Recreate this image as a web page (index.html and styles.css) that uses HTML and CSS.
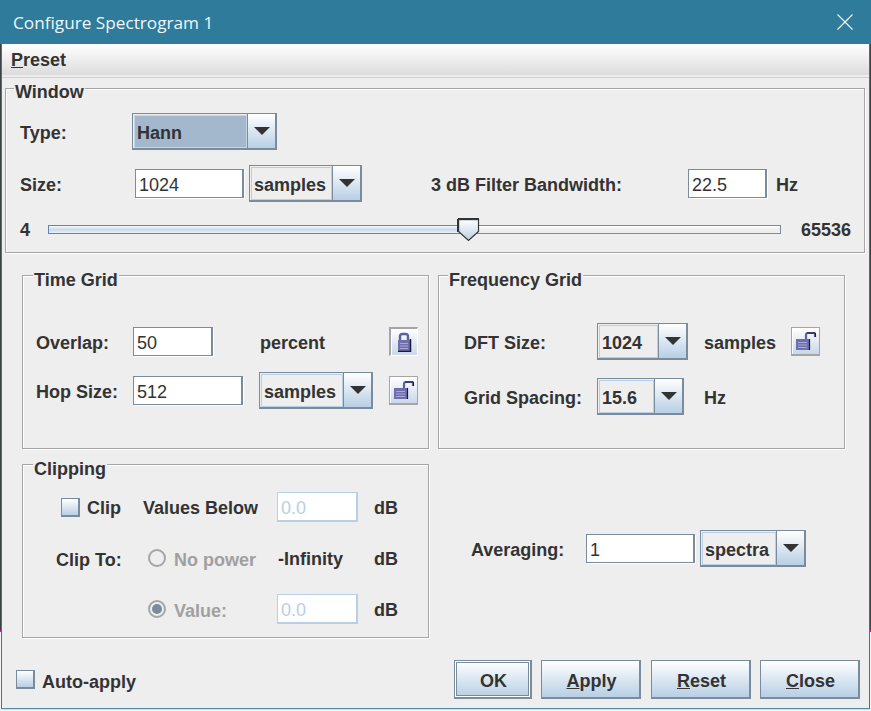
FILE: index.html
```html
<!DOCTYPE html>
<html lang="en">
<head>
    <meta charset="UTF-8">
    <meta name="viewport" content="width=device-width, initial-scale=1.0">
    <title>Configure Spectrogram 1</title>
    <link rel="stylesheet" href="styles.css">
</head>
<body>
<div class="dialog">
    <div class="titlebar">
        <span class="titlebar-text">Configure Spectrogram 1</span>
        <svg class="close-icon" width="16" height="16" viewBox="0 0 16 16"><path d="M0.5 0.5L15.5 15.5M15.5 0.5L0.5 15.5" stroke="#fff" stroke-width="1.1" fill="none"/></svg>
    </div>
    <div class="menubar"><span class="menu-item"><u>P</u>reset</span></div>

    <!-- Window -->
    <div class="group window-group">
        <span class="group-title">Window</span>
        <div class="row">
            <span class="label type-label">Type:</span>
            <div class="combo selected type-combo"><span class="combo-value">Hann</span><span class="combo-arrow"></span></div>
        </div>
        <div class="row">
            <span class="label size-label">Size:</span>
            <input class="field size-field" type="text" value="1024">
            <div class="combo size-combo"><span class="combo-value">samples</span><span class="combo-arrow"></span></div>
            <span class="label bandwidth-label">3 dB Filter Bandwidth:</span>
            <input class="field bandwidth-field" type="text" value="22.5">
            <span class="label hz-label">Hz</span>
        </div>
        <div class="row slider-row">
            <span class="label slider-min">4</span>
            <div class="slider">
                <div class="track-filled" style="width: 57.3%"></div>
                <div class="track-empty"></div>
                <svg class="thumb" style="left: 57.3%" width="23" height="24" viewBox="0 0 23 24">
                    <defs><linearGradient id="thumbFill" x1="0" y1="0" x2="0" y2="1"><stop offset="0" stop-color="#fff"/><stop offset="1" stop-color="#b8cfe5"/></linearGradient></defs>
                    <path d="M1.5 1.5H21.5V13.5L11.5 22.5L1.5 13.5Z" fill="url(#thumbFill)" stroke="#333" stroke-width="1.2"/>
                    <path d="M1 1H22" stroke="#333" stroke-width="2.4"/>
                    <path d="M1 1V14" stroke="#333" stroke-width="2.2"/>
                </svg>
            </div>
            <span class="label slider-max">65536</span>
        </div>
    </div>

    <div class="panels">
        <!-- Time Grid -->
        <div class="group grid-group">
            <span class="group-title">Time Grid</span>
            <div class="row time-row">
                <span class="label time-label">Overlap:</span>
                <input class="field overlap-field" type="text" value="50">
                <span class="label percent-label">percent</span>
                <button class="lock-btn pressed">
                    <svg width="18" height="20" viewBox="0 0 18 20"><path d="M5 9V4.500Q5 2 7.500 2H10.500Q13 2 13 4.500V9" fill="none" stroke="#5f5f9c" stroke-width="2.400"/><rect x="3" y="8" width="12" height="11" fill="#6f6fae"/><path d="M5 11.500H13M5 14H13M5 16.500H13" stroke="#a9a9d4" stroke-width="1"/><path d="M15.500 7V19.500H3" fill="none" stroke="#1c1c3a" stroke-width="1.500"/></svg>
                </button>
            </div>
            <div class="row time-row">
                <span class="label time-label">Hop Size:</span>
                <input class="field hop-field" type="text" value="512">
                <div class="combo hop-combo"><span class="combo-value">samples</span><span class="combo-arrow"></span></div>
                <button class="lock-btn">
                    <svg width="22" height="18" viewBox="0 1 22 18"><path d="M11 9V4Q11 2 13 2H18.500Q20 2 20 4V6" fill="none" stroke="#5f5f9c" stroke-width="2.200"/><path d="M12 2H20.500V6" fill="none" stroke="#1c1c3a" stroke-width="1"/><rect x="1" y="8" width="13" height="11" fill="#6f6fae"/><path d="M3 11.500H12M3 14H12M3 16.500H12" stroke="#a9a9d4" stroke-width="1"/><path d="M14.500 8V19.500H1" fill="none" stroke="#1c1c3a" stroke-width="1.200"/></svg>
                </button>
            </div>
        </div>

        <!-- Frequency Grid -->
        <div class="group grid-group freq-group">
            <span class="group-title">Frequency Grid</span>
            <div class="row freq-row">
                <span class="label freq-label">DFT Size:</span>
                <div class="combo dft-combo"><span class="combo-value">1024</span><span class="combo-arrow"></span></div>
                <span class="label freq-unit">samples</span>
                <button class="lock-btn dft-lock">
                    <svg width="22" height="18" viewBox="0 1 22 18"><path d="M11 9V4Q11 2 13 2H18.500Q20 2 20 4V6" fill="none" stroke="#5f5f9c" stroke-width="2.200"/><path d="M12 2H20.500V6" fill="none" stroke="#1c1c3a" stroke-width="1"/><rect x="1" y="8" width="13" height="11" fill="#6f6fae"/><path d="M3 11.500H12M3 14H12M3 16.500H12" stroke="#a9a9d4" stroke-width="1"/><path d="M14.500 8V19.500H1" fill="none" stroke="#1c1c3a" stroke-width="1.200"/></svg>
                </button>
            </div>
            <div class="row freq-row">
                <span class="label freq-label">Grid Spacing:</span>
                <div class="combo spacing-combo"><span class="combo-value">15.6</span><span class="combo-arrow"></span></div>
                <span class="label spacing-unit">Hz</span>
            </div>
        </div>

        <!-- Clipping -->
        <div class="group grid-group clip-group">
            <span class="group-title">Clipping</span>
            <div class="clip-grid">
                <label class="check clip-check"><span class="check-box"></span><span class="check-text">Clip</span></label>
                <span class="label values-label">Values Below</span>
                <input class="field disabled clip-field" type="text" value="0.0" disabled>
                <span class="label">dB</span>

                <span class="label clip-to">Clip To:</span>
                <label class="radio off"><span class="radio-dot"></span><span class="check-text">No power</span></label>
                <span class="label infinity-label">-Infinity</span>
                <span class="label">dB</span>

                <span></span>
                <label class="radio off"><span class="radio-dot checked"></span><span class="check-text">Value:</span></label>
                <input class="field disabled clip-field" type="text" value="0.0" disabled>
                <span class="label">dB</span>
            </div>
        </div>

        <!-- Averaging -->
        <div class="averaging">
            <span class="label averaging-label">Averaging:</span>
            <input class="field averaging-field" type="text" value="1">
            <div class="combo averaging-combo"><span class="combo-value">spectra</span><span class="combo-arrow"></span></div>
        </div>
    </div>

    <div class="footer">
        <label class="check"><span class="check-box"></span><span class="check-text">Auto-apply</span></label>
        <div class="buttons">
            <button class="btn default-btn">OK</button>
            <button class="btn"><u>A</u>pply</button>
            <button class="btn reset-btn"><u>R</u>eset</button>
            <button class="btn"><u>C</u>lose</button>
        </div>
    </div>
</div>
</body>
</html>
```

FILE: styles.css
```css
* {
    box-sizing: border-box;
}

html {
    height: 100%;
}

/* What shows behind the dialog: a sliver of desktop down both edges */
body {
    margin: 0;
    height: 100%;
    padding: 0 1px;
    background: linear-gradient(#3c4144 630px, #d0189c 630px, #d0189c 632px, #f4f6f7 632px);
    font-family: "Liberation Sans", Arial, sans-serif;
    font-size: 18px;
    color: #333;
    overflow: hidden;
}

.dialog {
    width: 869px;
    height: 709px;
    background: #eee;
    border-left: 1px solid #2e7b9b;
    border-right: 1px solid #2e7b9b;
    border-bottom: 1px solid #4a8fac;
    box-shadow: 0 1px 0 #d5dde2;
}

/* Title bar */
.titlebar {
    height: 44px;
    margin: 0 -2px;
    padding: 0 18px 0 13px;
    background: #2e7b9b;
    display: flex;
    align-items: center;
    justify-content: space-between;
}

.titlebar-text {
    font-family: "Open Sans", sans-serif;
    font-size: 17.2px;
    color: #f2f6f8;
}

/* Menu */
.menubar {
    height: 34px;
    padding: 0 9px;
    display: flex;
    align-items: center;
    background: linear-gradient(#fff, #dcdcdc);
    background-size: 100% 31px;
    background-repeat: no-repeat;
    border-bottom: 1px solid #cfcfcf;
    font-weight: bold;
}

/* Etched boxes */
.group {
    position: relative;
    border: 1px solid #a5a5a5;
    box-shadow: 1px 1px 0 #fff, inset 1px 1px 0 #fff;
}

.group-title {
    position: absolute;
    top: -7px;
    left: 9px;
    padding: 0 1px;
    line-height: 20px;
    background: #eee;
    font-weight: bold;
}

.row {
    display: flex;
    align-items: center;
}

.label {
    padding-top: 3px;
    font-weight: bold;
    white-space: nowrap;
}

/* Text fields */
.field {
    height: 29px;
    padding: 3px 0 0 3px;
    border: 1px solid #7a8b9c;
    border-right-width: 2px;
    background: #fff;
    box-shadow: 1px 1px 0 #fff;
    font: inherit;
    color: #333;
    outline: none;
}

.field.disabled {
    height: 30px;
    width: 81px;
    padding-top: 4px;
    border: 1px solid #b8cfe5;
    border-right-width: 2px;
    border-bottom-width: 2px;
    box-shadow: none;
    color: #b8cfe5;
}

/* Combo boxes */
.combo {
    height: 37px;
    display: flex;
    border: 1px solid #7a8b9c;
    border-width: 1px 2px 2px 1px;
    background: #eee;
}

.combo-value {
    flex: 1;
    padding: 2px 0 0 2px;
    margin: 1px 0 0 1px;
    border: 1px solid #b8cfe5;
    font-weight: bold;
    line-height: 30px;
    overflow: hidden;
}

.combo.selected .combo-value {
    background: #a3b8cd;
    border-color: #c6d6e6;
}

.combo-arrow {
    width: 28px;
    display: flex;
    align-items: center;
    justify-content: center;
    border-left: 1px solid #7a8b9c;
    background: linear-gradient(#fff, #b8cfe5);
}

.combo-arrow::after {
    content: "";
    border-left: 8px solid transparent;
    border-right: 8px solid transparent;
    border-top: 8px solid #333;
}

/* Window group */
.window-group {
    width: 860px;
    height: 165px;
    margin: 10px 0 0 3px;
    padding: 24px 13px 0 14px;
}

.window-group .group-title {
    left: 8px;
}

.type-label {
    width: 112px;
}

.type-combo {
    width: 145px;
}

.size-label {
    width: 115px;
}

.window-group .row + .row {
    margin-top: 15px;
}

.size-field {
    width: 109px;
}

.size-combo {
    width: 113px;
    margin-left: 5px;
}

.bandwidth-label {
    width: 257px;
    margin-left: 69px;
}

.bandwidth-field {
    width: 79px;
}

.hz-label {
    margin-left: 9px;
}

/* Slider */
.window-group .slider-row {
    margin-top: 16px;
    height: 24px;
}

.slider-min {
    width: 28px;
}

.slider {
    position: relative;
    width: 733px;
    height: 9px;
    display: flex;
}

.track-filled {
    border: 1px solid #6382bf;
    border-right: none;
    background: linear-gradient(#f4f8fb, #c8d9ea 55%, #edf2f7);
}

.track-empty {
    flex: 1;
    border: 1px solid #7a8b9c;
    background: linear-gradient(#fff, #eee 50%);
}

.thumb {
    position: absolute;
    top: -7px;
    margin-left: -11px;
}

.slider-max {
    margin-left: 20px;
}

/* Panels below the window group */
.panels {
    display: grid;
    grid-template-columns: 407px 407px;
    grid-template-rows: 174px 174px;
    column-gap: 9px;
    row-gap: 15px;
    margin: 22px 0 0 20px;
}

.grid-group .group-title {
    top: -6px;
    left: 10px;
}

.freq-group .group-title {
    left: 9px;
}

.grid-group > .row {
    padding-left: 13px;
}

.time-row {
    height: 37px;
    margin-top: 12px;
}

.time-row:first-of-type {
    margin-top: 47px;
}

.time-label {
    width: 97px;
    padding-top: 4px;
}

.overlap-field {
    width: 80px;
}

.percent-label {
    width: 113px;
    margin-left: 47px;
    padding-top: 4px;
}

.hop-field {
    width: 110px;
}

.hop-combo {
    width: 114px;
    margin-left: 16px;
}

.lock-btn {
    width: 29px;
    height: 29px;
    margin-left: 16px;
    padding: 0;
    display: flex;
    align-items: center;
    justify-content: center;
    border: 1px solid #a5a5a5;
    border-width: 1px 1px 2px 1px;
    background: linear-gradient(#fff, #c9d8e8);
    box-shadow: inset 1px 1px 0 #fff;
}

.lock-btn.pressed {
    border-width: 2px 1px 1px 2px;
    border-color: #a5a5a5 #fff #fff #a5a5a5;
}

.freq-row {
    height: 37px;
    margin-top: 18px;
}

.freq-row:first-of-type {
    margin-top: 47px;
}

.freq-group > .row {
    padding-left: 25px;
}

.freq-label {
    width: 133px;
}

.dft-combo {
    width: 91px;
}

.spacing-combo {
    width: 87px;
}

.freq-unit {
    margin-left: 16px;
}

.spacing-unit {
    margin-left: 20px;
}

.dft-lock {
    margin-left: 15px;
}

/* Clipping */
.clip-grid {
    display: grid;
    grid-template-columns: 87px 134px 97px auto;
    grid-auto-rows: 30px;
    row-gap: 21px;
    align-items: center;
    padding: 27px 0 0 33px;
}

.check {
    display: flex;
    align-items: center;
    font-weight: bold;
}

.check-text {
    padding-top: 3px;
}

.check-box {
    width: 19px;
    height: 19px;
    margin-right: 7px;
    border: 1px solid #7a8b9c;
    border-width: 1px 2px 2px 1px;
    background: linear-gradient(#fff, #b8cfe5);
}

.clip-check {
    margin-left: 5px;
}

.values-label {
    width: 115px;
    overflow: hidden;
}

.clip-to {
    padding-top: 5px;
}

.radio {
    display: flex;
    align-items: center;
    margin-left: 5px;
    font-weight: bold;
    color: #a0a0a0;
}

.radio .check-text {
    padding-top: 5px;
}

.radio-dot {
    width: 18px;
    height: 18px;
    margin-right: 8px;
    border: 2px solid #a5a5a5;
    border-radius: 50%;
    display: flex;
    align-items: center;
    justify-content: center;
}

.radio-dot.checked::after {
    content: "";
    width: 10px;
    height: 10px;
    border-radius: 50%;
    background: #7a8b9c;
}

.infinity-label {
    margin-left: 1px;
}

/* Averaging */
.averaging {
    display: flex;
    align-items: center;
    align-self: start;
    margin: 66px 0 0 33px;
}

.averaging-label {
    width: 115px;
}

.averaging-field {
    width: 109px;
}

.averaging-combo {
    width: 106px;
    margin-left: 5px;
}

/* Footer */
.footer {
    display: flex;
    align-items: center;
    justify-content: space-between;
    margin-top: 22px;
    padding: 0 9px 0 14px;
}

.footer .check-text {
    padding-top: 5px;
}

.buttons {
    display: flex;
    gap: 9px;
}

.btn {
    width: 100px;
    height: 39px;
    padding: 4px 0 0 2px;
    border: 1px solid #7a8b9c;
    border-width: 1px 2px 2px 1px;
    background: linear-gradient(#fff, #b8cfe5);
    font: inherit;
    font-weight: bold;
    color: #333;
}

.default-btn {
    width: 78px;
    box-shadow: inset 0 0 0 1px #fff, inset 0 0 0 2px #7a8b9c;
}

.reset-btn {
    margin-left: 1px;
}
```
